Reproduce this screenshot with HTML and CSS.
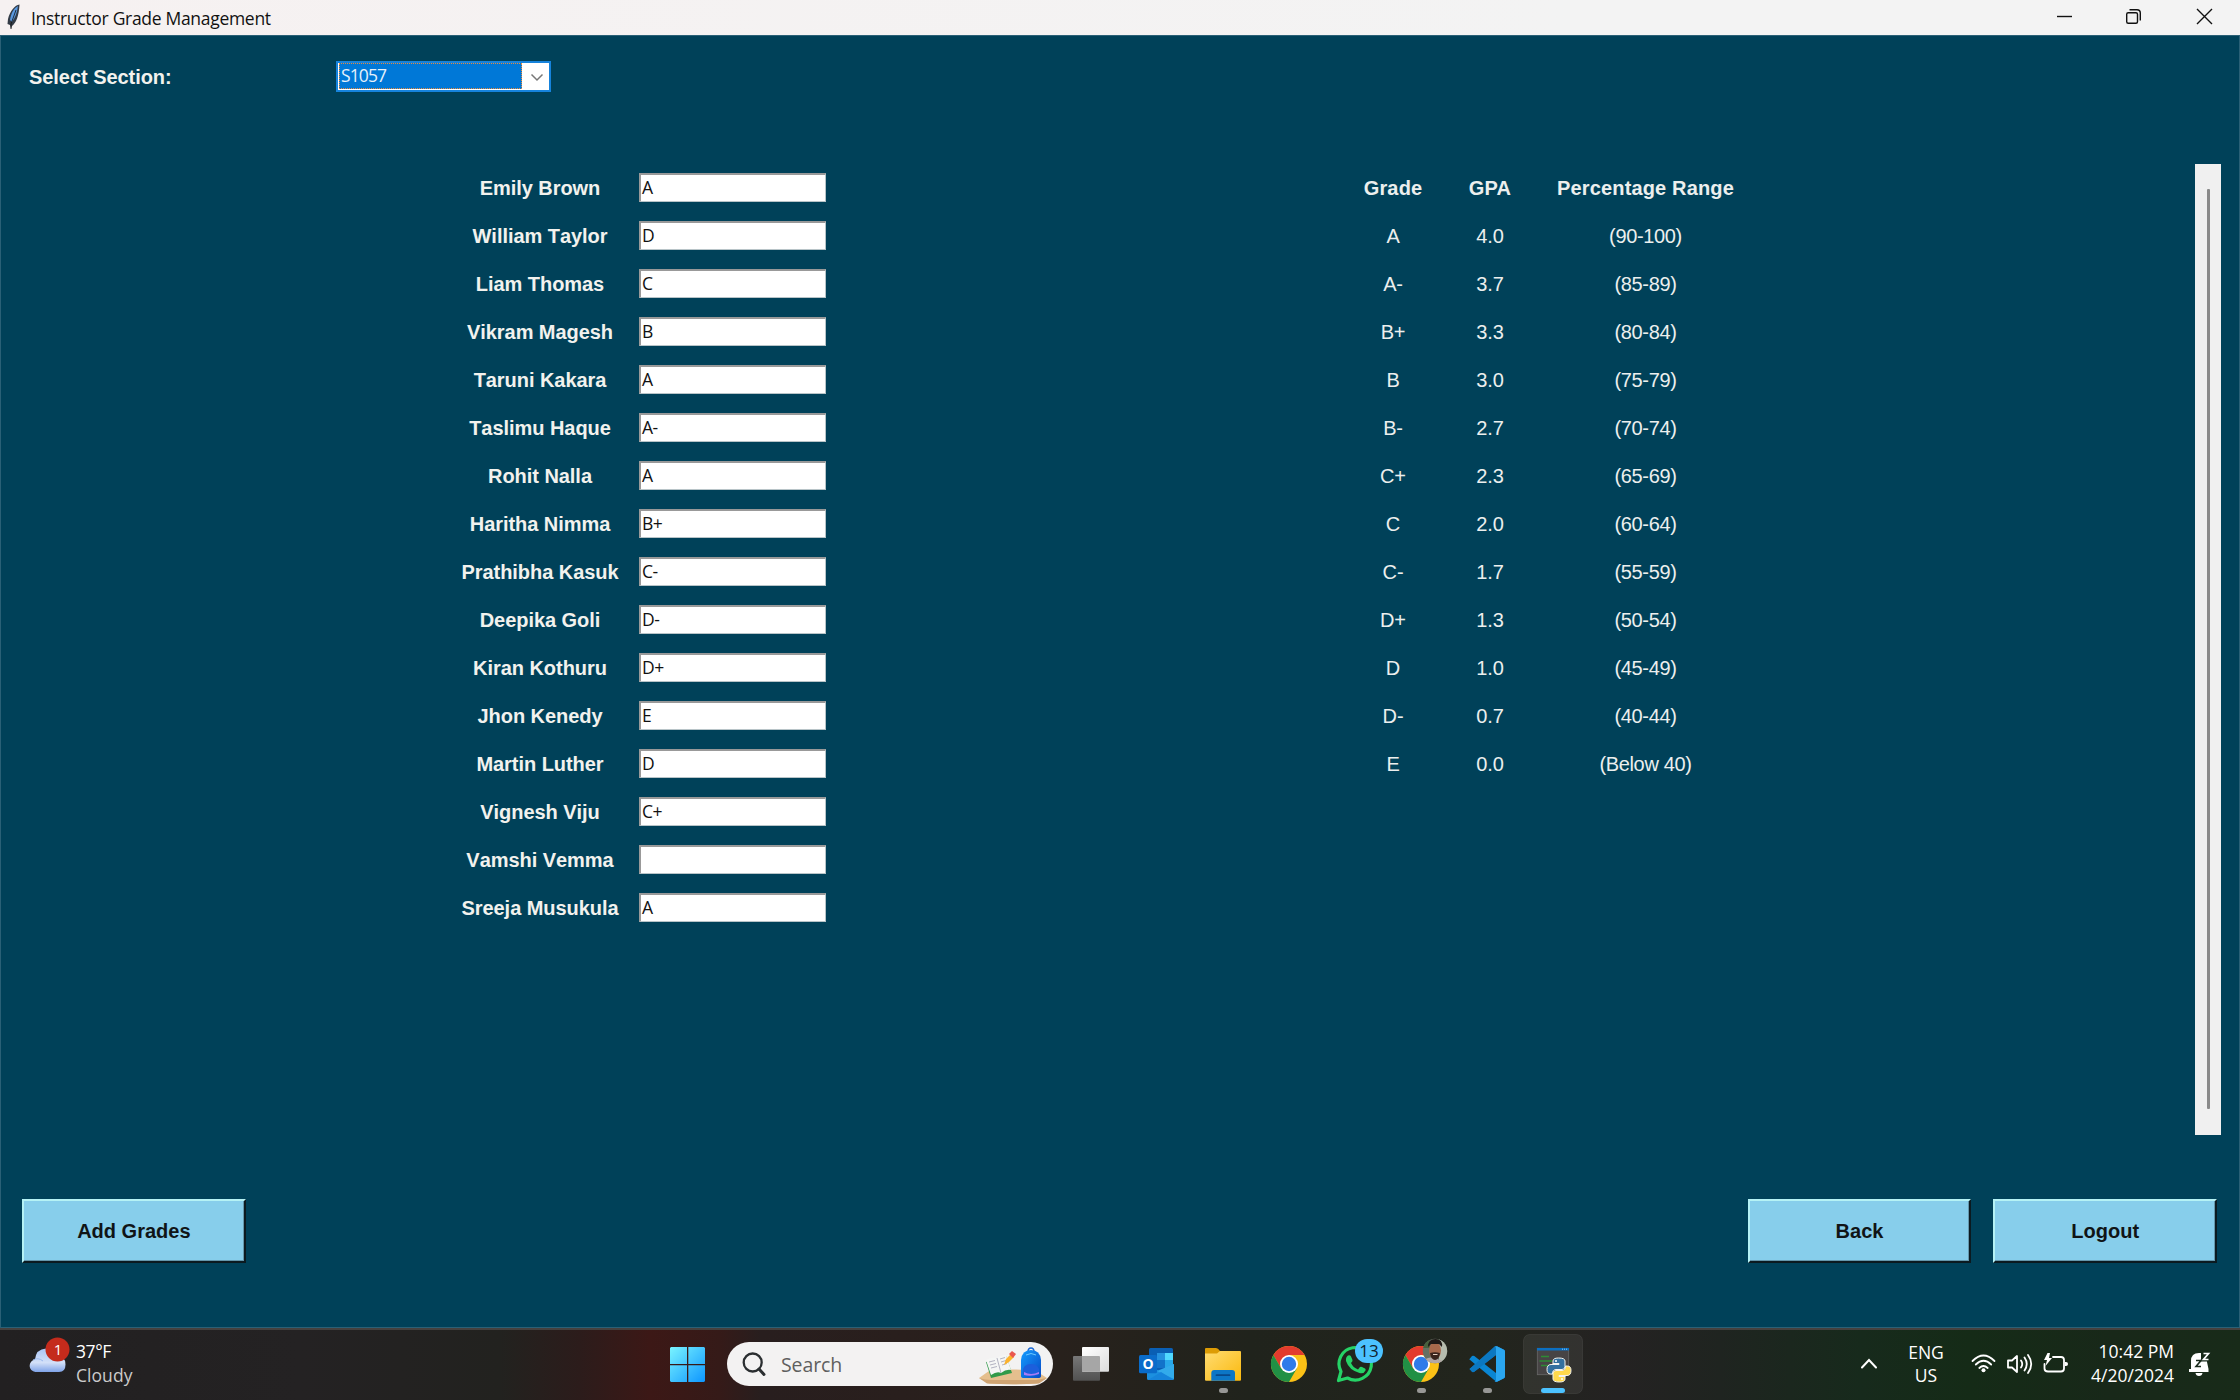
FILE: index.html
```html
<!DOCTYPE html>
<html lang="en">
<head>
<meta charset="utf-8">
<title>Instructor Grade Management</title>
<link rel="stylesheet" href="styles.css">
</head>
<body>
<header class="titlebar">
  <svg class="feather" width="14" height="28" viewBox="0 0 14 28"><path d="M12.500 .5C8 1 3 7 1 15L.5 20 3 21 4 25 5 22C9 19 12 12 12.500 .5Z" fill="#333b46"/><path d="M11 2C7 4 4 9 3 16L5 18C8 14 10 9 11 2Z" fill="#5a99e0"/><path d="M9 6 4 20V25" stroke="#111" fill="none" stroke-width=".8"/></svg>
  <span class="title">Instructor Grade Management</span>
  <svg class="controls" width="240" height="35" viewBox="0 0 240 35" fill="none" stroke="#111" stroke-width="1.400"><path d="M57 16.500H72"/><rect x="126.700" y="12.700" width="10.800" height="10.600" rx="1.500"/><path d="M129.500 9.700H137Q140.300 9.700 140.300 13V20.500"/><path d="M197 9 212 24M212 9 197 24"/></svg>
</header>
<main class="window">
  <div class="section-row">
    <label class="section-label">Select Section:</label>
    <div class="combo"><span class="combo-value">S1057</span><svg width="25" height="27" viewBox="0 0 25 27"><path d="M9.500 11.500 15 17 20.500 11.500" fill="none" stroke="#777" stroke-width="1.500"/></svg></div>
  </div>
  <div class="content">
    <div class="students" id="students"></div>
    <div class="scale" id="scale"></div>
    <div class="scrollbar"><div class="thumb"></div></div>
  </div>
  <div class="actions">
    <button class="btn">Add Grades</button>
    <button class="btn back">Back</button>
    <button class="btn">Logout</button>
  </div>
</main>
<footer class="taskbar">
  <div class="weather">
    <svg width="46" height="70" viewBox="0 0 46 70"><defs><linearGradient id="cl" x2="0" y2="1"><stop stop-color="#a9c5f6"/><stop offset=".6" stop-color="#d3e0f8"/><stop offset="1" stop-color="#7fa3e8"/></linearGradient></defs><path d="M6.300 42A6.300 6.300 0 0 1 6 29.500Q7 19 17 18.500Q25 18 28 26Q36.500 26 36.500 34.500Q36.500 42 30 42Z" fill="url(#cl)"/><path d="M4 30Q9 27 14 31" stroke="#9bb9ee" fill="none"/><circle cx="28.500" cy="19.500" r="12" fill="#c42b1c"/><text x="29" y="25" class="badge-red">1</text></svg>
    <div class="lines weather-text"><span class="temp">37°F</span><span class="cond">Cloudy</span></div>
  </div>
  <svg class="start" width="36" height="36" viewBox="0 0 36 36"><defs><linearGradient id="wn" gradientUnits="userSpaceOnUse" x1="0" y1="0" x2="36" y2="36"><stop stop-color="#7af4ff"/><stop offset="1" stop-color="#0a93ff"/></linearGradient></defs><path d="M1 0H17V17H0V1ZM18.300 0H34L35 1V17H18.300ZM0 18.300H17V35H1L0 34ZM18.300 18.300H35V34L34 35H18.300Z" fill="url(#wn)"/></svg>
  <div class="search">
    <svg width="44" height="44" viewBox="0 0 44 44" fill="none" stroke="#2b2f31" stroke-width="2.300"><circle cx="25.700" cy="20.500" r="9"/><path d="M32 27 37 32.500" stroke-width="3" stroke-linecap="round"/></svg>
    <span class="search-text">Search</span>
    <svg class="scene" width="70" height="44" viewBox="0 0 70 44"><defs><linearGradient id="bp" x2="1" y2="1"><stop stop-color="#159cff"/><stop offset="1" stop-color="#074bc6"/></linearGradient></defs><path d="M0 36 10 29Q34 26 57 29L68 36 58 41.500Q34 43 10 41.500Z" fill="#e5bf8e"/><path d="M0 36Q6 38 12 38H57L68 36 60 41.500Q34 43 8 41.500Z" fill="#cfa473"/><path d="M7 20 12 36 33 31 27 14Z" fill="#319a4a"/><path d="M7 18 12 33Q18 29 22 31 27 27 32 28L27 13Q21 13 18 16 12 15 7 18Z" fill="#f5f6f5"/><path d="M18 16 22 31M10 20 16 18.500M11 23 17 21.500M12 26 18 24.500M21 17 26 15.500M22 20 27 18.500M23 23 28 21.500" stroke="#aab" fill="none" stroke-width=".9"/><path d="M25 23 27 17 32 12 35 15 30 20Z" fill="#fcb32c"/><path d="M30 12 33 9 37 12 34 16Z" fill="#e9574f"/><path d="M49 10Q49 6 52 6T55 10" fill="none" stroke="#1b69d6" stroke-width="1.500"/><path d="M42 34V18Q43 8 52 8T62 18V34Q62 36 59 36H45Q42 36 42 34Z" fill="url(#bp)"/><path d="M44 31V27Q46 22 52 22T60 27V31Q60 34 52 34T44 31Z" fill="#1c5fdc"/><path d="M45 30Q52 34 60 30V32Q52 35 45 33Z" fill="#a77cf5"/><path d="M47 13Q52 10 57 13" stroke="#6cc9ff" fill="none"/></svg>
  </div>
  <nav class="apps">
    <svg class="app" viewBox="0 0 66 72"><defs><linearGradient id="tv" x2="1" y2="1"><stop stop-color="#fff"/><stop offset="1" stop-color="#dcdcdc"/></linearGradient><linearGradient id="tg" x2="0" y2="1"><stop stop-color="#777"/><stop offset="1" stop-color="#515151"/></linearGradient></defs><rect x="15" y="28" width="27" height="24.700" rx="1" fill="url(#tg)"/><rect x="24" y="19" width="27" height="24.700" rx="1" fill="url(#tv)"/><path d="M24 28H41Q42 28 42 29V43.700H25Q24 43.700 24 43Z" fill="#a6a6a6"/></svg>
    <svg class="app" viewBox="0 0 66 72"><rect x="25" y="20" width="24" height="28" rx="1.500" fill="#0a5fb4"/><path d="M33 25H41V32H33Z" fill="#2591df"/><path d="M41 25H49V32H41Z" fill="#50d9ff"/><path d="M33 32H41V40H33Z" fill="#1273ca"/><path d="M41 32H49V40H41Z" fill="#28a8ea"/><path d="M23 36 37 44 50 36V50.500Q50 52 48.500 52H24.500Q23 52 23 50.500Z" fill="#1c90df"/><path d="M50 36V51L33 43Z" fill="#32abeb"/><path d="M24 52 37 44 50 52Z" fill="#1684da"/><rect x="15" y="27" width="18" height="18.300" rx="1.500" fill="#0a6cca"/><text x="24" y="41.200" class="outlook-o">O</text></svg>
    <svg class="app" viewBox="0 0 66 72"><defs><linearGradient id="fd" x2="1" y2="1"><stop stop-color="#ffdc72"/><stop offset="1" stop-color="#fbb90d"/></linearGradient></defs><path d="M15 30V21Q15 20 16 20H26Q28 20 30 23V30Z" fill="#dd9c05"/><path d="M15 25.500H27L30 23H50Q51 23 51 24V51.500Q51 52.700 50 52.700H16Q15 52.700 15 51.500Z" fill="url(#fd)"/><path d="M21.300 52.700V45Q21.300 42 24.300 42H42Q45 42 45 45V52.700Z" fill="#0c76c6"/><path d="M26.500 47.200H39.500" stroke="#08488a" stroke-width="1.800" stroke-linecap="round"/><rect class="dot" x="29" y="60" width="9" height="5" rx="2.500"/></svg>
    <svg class="app" viewBox="0 0 66 72"><g id="chrome"><circle cx="33" cy="36" r="18" fill="#fbc116"/><path d="M17.400 27A18 18 0 0 1 48.600 27H33L25.200 40.500Z" fill="#e33b2e"/><path d="M17.400 27A18 18 0 0 0 33 54L40.800 40.500H25.200Z" fill="#219045"/><circle cx="33" cy="36" r="9" fill="#fff"/><circle cx="33" cy="36" r="7.200" fill="#2f7bea"/></g></svg>
    <svg class="app" viewBox="0 0 66 72"><path d="M16.500 52.500 19 43.500A16.200 16.200 0 1 1 25.500 50Z" fill="none" stroke="#25d366" stroke-width="3.200" stroke-linejoin="round"/><path d="M26 27.500Q28 26.500 29 28.500L30.500 32Q31 33 29 35 31 39.500 36 41.500L38 39Q39 38.500 40 39L43 40.500Q44 41 43.500 42.500 42 46 37.500 45 27 42 24 33 23.500 29 26 27.500Z" fill="#25d366"/><rect x="33" y="11" width="28" height="24" rx="12" fill="#4cc2ff"/><text x="47" y="29" class="badge-blue">13</text></svg>
    <svg class="app" viewBox="0 0 66 72"><defs><clipPath id="av"><circle cx="47" cy="23" r="12.200"/></clipPath></defs><use href="#chrome"/><g clip-path="url(#av)"><rect x="34" y="10" width="26" height="26" fill="#667063"/><path d="M51 10H60V36H51Z" fill="#b5bcae"/><path d="M34 10H42V20H34Z" fill="#47613d"/><path d="M35 36Q37 28 46 30T59 36Z" fill="#b2a7a4"/><ellipse cx="47" cy="22.500" rx="6" ry="8.500" fill="#a8694c"/><path d="M40 19Q40 11 47.500 11T54 19L51 16H43Z" fill="#201a18"/><path d="M42 25Q47 23.500 52 25 51 32 47 32T42 25Z" fill="#3a241c"/><path d="M45 26.500H49.500" stroke="#e7cfc0"/></g><rect class="dot" x="29" y="60" width="9" height="5" rx="2.500"/></svg>
    <svg class="app" viewBox="0 0 66 72"><path d="M15.500 41 18 43.800Q19 44.500 20.300 43.700L42 27V18.500Z" fill="#0a70b8"/><path d="M15.500 31 18 28Q19 27.300 20.300 28L42 45V53.500L15.500 31.500Q15 31 15.500 31Z" fill="#0a86d3"/><path d="M15.500 41 40.500 18.500Q41.500 18 43 18.300L50 21.800Q51 22.400 51 23.500V48.500Q51 49.600 50 50.200L43 53.700Q41.500 54 40.500 53.300 42 53.500 42 51.500V27L20.300 43.700Q19 44.500 18 43.800Z" fill="#0b78c2"/><path d="M40.500 18.500Q42 18 43 18.300L50 21.800Q51 22.400 51 23.500V48.500Q51 49.600 50 50.200L43 53.700Q41.500 54 40.500 53.300 42 53.500 42 51.500V20.500Q42 18.500 40.500 18.500Z" fill="#2aa6f0"/><rect class="dot" x="29" y="60" width="9" height="5" rx="2.500"/></svg>
    <svg class="app" viewBox="0 0 66 72"><rect x="3.500" y="6.500" width="59" height="59" rx="6" fill="#fff" fill-opacity=".07" stroke="#fff" stroke-opacity=".07"/><rect x="17.300" y="20.300" width="31.400" height="26.400" fill="#474445" stroke="#686868" stroke-width=".8"/><rect x="17" y="20" width="32" height="2.500" fill="#0c6fc0"/><path d="M42 21.200H47" stroke="#8fd0ff" stroke-dasharray="1 1"/><path d="M21 28.500H29M19.500 33H32M21 37.500H28" stroke="#2e8b35" stroke-width="1.300"/><g stroke="#f3f3ee" stroke-width="1" stroke-linejoin="round"><path d="M33 36V33Q33 30 38.500 30 45 30 45 33V38.500Q45 41.500 42 41.500H36Q32.500 41.500 32.500 46H30.500Q27 46 27 41.500 27 36.500 31 36.500H39V35.500H33Z" fill="#33709f"/><path d="M45 48V51Q45 54 39.500 54 33 54 33 51V45.500Q33 42.500 36 42.500H42Q45.500 42.500 45.500 38H47.500Q51 38 51 42.500 51 47.500 47 47.500H39V48.500H45Z" fill="#ffd94d"/></g><circle cx="36" cy="33" r="1" fill="#fff"/><circle cx="42" cy="51" r="1" fill="#fff"/><rect x="21" y="60" width="24" height="5" rx="2.500" fill="#4cc2ff"/></svg>
  </nav>
  <div class="tray">
    <svg width="16" height="36" viewBox="0 0 16 36" fill="none" stroke="#fff" stroke-width="2" stroke-linecap="round"><path d="M1 21.500 8 14 15 21.500"/></svg>
    <div class="lines lang"><span>ENG</span><span>US</span></div>
    <svg class="status" width="98" height="36" viewBox="0 0 98 36" fill="none" stroke="#fff" stroke-width="1.800" stroke-linecap="round"><path d="M1.500 15Q12.500 4 23.500 15M4.800 18.500Q12.500 11 20.200 18.500M8.300 22Q12.500 18 16.700 22"/><circle cx="12.500" cy="24.300" r="2" fill="#fff" stroke="none"/><path d="M37 14.500H41L46 10V26L41 21.500H37ZM50 14.500Q52.500 18 50 21.500M53.500 11.500Q58 18 53.500 24.500M57 9Q63.500 18 57 27" stroke-linejoin="round"/><path d="M82 11H90Q93 11 93 14V22.500Q93 25.500 90 25.500H77Q73.500 25.500 73.500 22.500V18"/><path d="M94 16H95Q97 16 97 18T95 20H94Z" fill="#fff" stroke="none"/><path d="M76.500 7 73 14H76L74.500 20 81 12H78L79 7Z" fill="#fff" stroke="none"/></svg>
    <div class="lines clock"><span>10:42 PM</span><span>4/20/2024</span></div>
    <svg class="bell" width="23" height="36" viewBox="0 0 23 36"><path d="M3 23V15Q3 7 11 7H13V13H19V16L20.500 23V26H1V23ZM7.500 27H14.500Q14 30 11 30T7.500 27Z" fill="#fff"/><path d="M8 14.500H13L8 20.500H13" fill="none" stroke="#192b1c" stroke-width="1.600"/><path d="M15.500 7.500H20.500L15.500 13.500H20.500" fill="none" stroke="#192b1c" stroke-width="4"/><path d="M15.500 7.500H20.500L15.500 13.500H20.500" fill="none" stroke="#fff" stroke-width="1.700"/></svg>
  </div>
</footer>
<script src="app.js"></script>
</body>
</html>
```
FILE: styles.css
```css
* { box-sizing: border-box; }
body { margin: 0; width: 2240px; height: 1400px; overflow: hidden; display: flex; flex-direction: column; font-family: "Liberation Sans", Arial, sans-serif; font-size: 20px; }
svg { display: block; flex: none; }

.titlebar { height: 35px; flex: none; display: flex; background: linear-gradient(90deg, #f6f1f1, #f3f3f3 70%); padding-left: 7px; }
.feather { margin-top: 4px; }
.title { margin-left: 10px; font: 17.500px/36px "Open Sans", "Noto Sans", sans-serif; letter-spacing: -0.3px; color: #111; white-space: nowrap; }
.controls { margin-left: auto; }

.window { height: 1293px; flex: none; display: flex; flex-direction: column; background: #004159; border: 1px solid #2a6076; }
.section-row { display: flex; align-items: center; margin-top: 24px; height: 32px; padding-left: 28px; }
.section-label { width: 307px; padding-top: 2px; font-weight: bold; color: #f2f2ee; white-space: nowrap; letter-spacing: -0.05px; }
.combo { width: 215px; height: 31px; display: flex; align-items: center; background: #fff; border: 2px solid #1683dc; padding-left: 1px; }
.combo-value { width: 183px; height: 26px; background: #0078d7; border: 1px dotted #e98b3d; color: #e6f1fb; font: 17.500px/23px "Open Sans", sans-serif; letter-spacing: -0.9px; padding-left: 1px; }

.content { display: flex; margin-top: 72px; height: 971px; }
.students { margin-left: 449px; width: 380px; }
.student { display: flex; align-items: flex-start; height: 48px; }
.name { width: 180px; line-height: 49px; text-align: center; font-weight: bold; font-kerning: none; color: #f2f2ee; white-space: nowrap; letter-spacing: -0.05px; }
.grade { margin: 9px 0 0 9px; width: 187px; height: 29px; background: #fff; border: 2px solid #fff; border-top-color: #999; border-left-color: #999; border-right: 1px solid #b8c4c8; border-bottom: 1px solid #b8c4c8; font: 17.500px/25px "Open Sans", sans-serif; letter-spacing: -0.5px; padding-left: 1px; color: #111; }
.scale { margin-left: 513px; width: 400px; }
.scale-row { display: grid; grid-template-columns: 100px 94px 217px; height: 48px; line-height: 49px; text-align: center; color: #ecefee; letter-spacing: -0.15px; }
.scale-row span:last-child { letter-spacing: -0.35px; }
.scale-row.head, .scale-row.head span:last-child { font-weight: bold; letter-spacing: 0.15px; }
.scrollbar { margin-left: 452px; width: 26px; background: #f0f0f0; padding: 25px 0 26px 12px; }
.thumb { width: 3px; height: 100%; background: #8a8a8a; border-radius: 1px; }

.actions { display: flex; margin-top: 64px; padding-left: 21px; }
.btn { width: 224px; height: 64px; padding: 0; border: 2px solid; border-color: #b5f2f5 #0b1a20 #0b1a20 #b5f2f5; box-shadow: inset -1px -1px #6497ac; background: #87ceeb; color: #101416; font: bold 20px "Liberation Sans", Arial, sans-serif; margin-right: 22px; }
.back { margin-left: 1480px; }

.taskbar { height: 72px; flex: none; display: flex; color: #fff; font: 17.500px/24px "Open Sans", "Noto Sans", sans-serif; border-top: 2px solid #45413f; background: linear-gradient(90deg, #222021 0, #242223 300px, #22221f 500px, #2c1c1b 580px, #3c1816 650px, #351a18 720px, #281e1e 760px, #291f1d 900px, #28211c 1060px, #20231c 1250px, #22251d 1480px, #242222 1620px, #1f2420 1720px, #172a1c 1860px, #152b17 1970px, #182819 2110px, #182b19 2240px); }
.weather { display: flex; width: 200px; margin-left: 29px; }
.lines { display: flex; flex-direction: column; white-space: nowrap; padding-top: 9px; }
.weather-text { margin-left: 1px; }
.temp { letter-spacing: -0.4px; }
.cond { color: #cbcbcb; letter-spacing: 0.05px; }
.badge-red { font: 15px "Open Sans", sans-serif; fill: #fff; text-anchor: middle; }
.badge-blue { font: 17px "Open Sans", sans-serif; fill: #10202b; text-anchor: middle; }
.outlook-o { font: bold 14px "Open Sans", sans-serif; fill: #fff; text-anchor: middle; }
.start { margin: 17px 0 0 441px; }
.search { margin: 12px 0 0 21px; width: 326px; height: 44px; flex: none; border-radius: 22px; background: #f3f2f2; display: flex; overflow: hidden; }
.search-text { margin-left: 10px; width: 198px; color: #5f5f5f; font-size: 19.500px; line-height: 45px; letter-spacing: -0.1px; }
.apps { display: flex; margin: -2px 0 0 5px; }
.app { width: 66px; height: 72px; }
.dot { fill: #979795; }
.tray { display: flex; margin-left: 275px; }
.tray > svg { margin-top: 16px; }
.lang { width: 70px; margin-left: 14px; padding-top: 11px; line-height: 23px; text-align: center; }
.status { margin-left: 10px; }
.clock { width: 105px; text-align: right; }
.tray > .bell { margin: 16px 0 0 14px; }
```
FILE: app.js
```js
const students = [["Emily Brown","A"],["William Taylor","D"],["Liam Thomas","C"],["Vikram Magesh","B"],["Taruni Kakara","A"],["Taslimu Haque","A-"],["Rohit Nalla","A"],["Haritha Nimma","B+"],["Prathibha Kasuk","C-"],["Deepika Goli","D-"],["Kiran Kothuru","D+"],["Jhon Kenedy","E"],["Martin Luther","D"],["Vignesh Viju","C+"],["Vamshi Vemma",""],["Sreeja Musukula","A"]];
const scale = [["Grade","GPA","Percentage Range"],["A","4.0","(90-100)"],["A-","3.7","(85-89)"],["B+","3.3","(80-84)"],["B","3.0","(75-79)"],["B-","2.7","(70-74)"],["C+","2.3","(65-69)"],["C","2.0","(60-64)"],["C-","1.7","(55-59)"],["D+","1.3","(50-54)"],["D","1.0","(45-49)"],["D-","0.7","(40-44)"],["E","0.0","(Below 40)"]];
document.getElementById("students").innerHTML = students.map(([n, g]) => `<div class="student"><span class="name">${n}</span><div class="grade">${g}</div></div>`).join("");
document.getElementById("scale").innerHTML = scale.map((r, i) => `<div class="scale-row${i ? "" : " head"}">${r.map(c => `<span>${c}</span>`).join("")}</div>`).join("");
```
